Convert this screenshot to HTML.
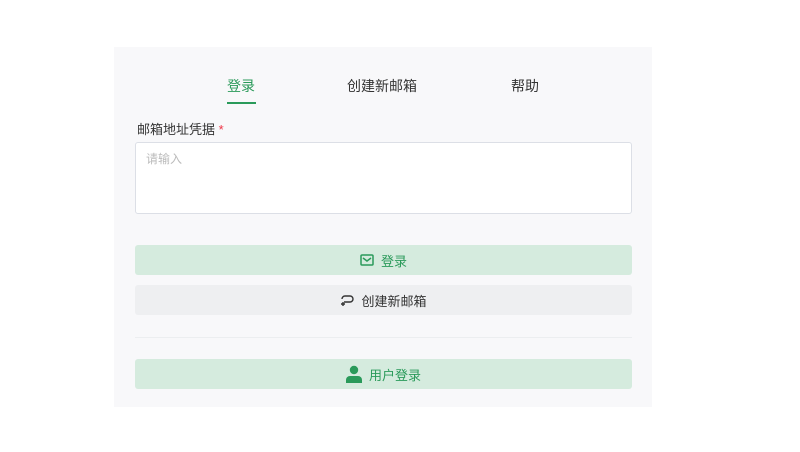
<!DOCTYPE html><html><head><meta charset="utf-8"><style>
body{margin:0;width:800px;height:452px;background:#fff;font-family:"Liberation Sans","Noto Sans CJK SC",sans-serif;font-size:13px;position:relative;overflow:hidden}
.p{position:absolute;left:114px;top:47px;width:538px;height:360px;background:#f8f8fa}
.a{position:absolute}
.tab{position:absolute;top:76px;font-size:14px;color:#333}
.btn{position:absolute;left:135px;width:497px;height:30px;border-radius:3px;display:flex;align-items:center;justify-content:center;gap:7px}
</style></head><body>
<div class="p"></div>
<div class="tab" style="left:227px;color:#2a9a5a">登录</div>
<div class="a" style="left:227px;top:102px;width:29px;height:2px;background:#2a9a5a"></div>
<div class="tab" style="left:347px">创建新邮箱</div>
<div class="tab" style="left:511px">帮助</div>
<div class="a" style="left:137px;top:119px;color:#333">邮箱地址凭据 <span style="color:#e34">*</span></div>
<div class="a" style="left:135px;top:142px;width:495px;height:70px;background:#fff;border:1px solid #dcdfe6;border-radius:3px"></div>
<div class="a" style="left:146px;top:150px;color:#bbb;font-size:12px">请输入</div>
<div class="btn" style="top:245px;background:#d5ebde;color:#2a9a5a"><svg width="14" height="12" viewBox="0 0 14 12"><rect x="1" y="1" width="12" height="10" rx="1" fill="none" stroke="#2a9a5a" stroke-width="1.5"/><path d="M3 4l4 3 4-3" fill="none" stroke="#2a9a5a" stroke-width="1.5"/></svg>登录</div>
<div class="btn" style="top:285px;background:#eeeff1;color:#333"><svg width="14" height="12" viewBox="0 0 14 12"><path d="M4 8H10a3 3 0 0 0 0-6H5a3 3 0 0 0-3 3" fill="none" stroke="#333" stroke-width="1.4"/><path d="M3 8v4M1 10h4" stroke="#333" stroke-width="1.4"/></svg>创建新邮箱</div>
<div class="a" style="left:135px;top:337px;width:497px;height:1px;background:#eceef0"></div>
<div class="btn" style="top:359px;background:#d5ebde;color:#2a9a5a"><svg width="16" height="18" viewBox="0 0 16 18"><circle cx="8" cy="5" r="4.2" fill="#2a9a5a"/><path d="M0 18v-3a4 4 0 0 1 4-4h8a4 4 0 0 1 4 4v3z" fill="#2a9a5a"/></svg>用户登录</div>
</body></html>
